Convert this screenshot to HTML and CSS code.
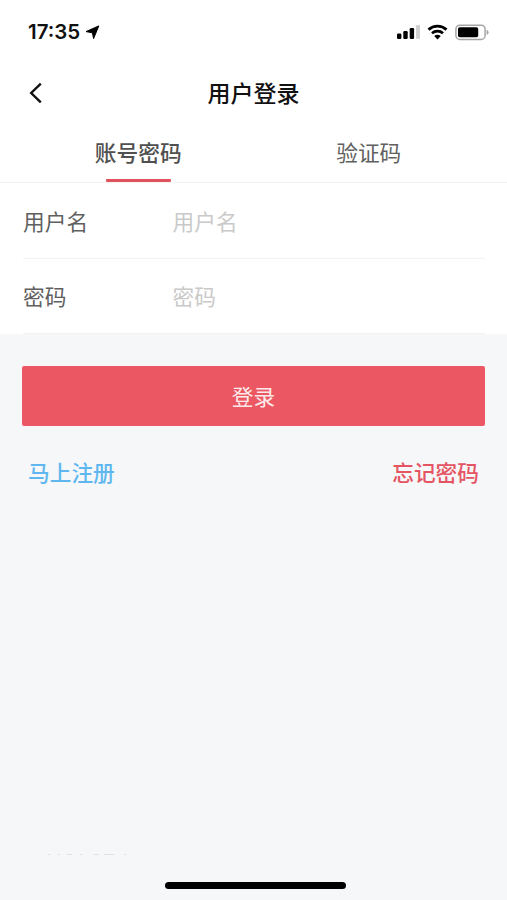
FILE: index.html
```html
<!DOCTYPE html>
<html lang="zh-CN">
<head>
<meta charset="utf-8">
<title>用户登录</title>
<link rel="stylesheet" href="styles.css">
</head>
<body>
<div class="screen">
  <header class="status">
    <span class="time">17:35</span>
    <svg class="locate" width="15" height="15" viewBox="0 0 15 15"><path d="M13.8.9 8.6 13.6 7.4 7.8 1 6.6Z"/></svg>
    <div class="indicators">
      <svg width="24" height="16" viewBox="0 0 24 16"><rect x="0" y="9.5" width="4.4" height="5.5" rx="1.2"/><rect x="6.3" y="7" width="4.4" height="8" rx="1.2"/><rect x="12.7" y="4" width="4.4" height="11" rx="1.2"/><rect class="off" x="19" y="1" width="4" height="14" rx="1.2"/></svg>
      <svg class="wifi" width="22" height="16" viewBox="0 0 22 16"><path d="M1.5 5.6a13.5 13.5 0 0 1 18 0M5 9.3a8.3 8.3 0 0 1 11 0"/><path class="dot" d="M7.2 12.1a5.2 5.2 0 0 1 6.6 0L10.5 15.4Z"/></svg>
      <svg class="battery" width="34" height="17" viewBox="0 0 34 17"><rect class="shell" x=".9" y="1.2" width="29.2" height="14.2" rx="4"/><rect x="3" y="3.3" width="20.2" height="10" rx="1.8"/><path class="cap" d="M31.6 5.8q2 .8 2 2.6t-2 2.6Z"/></svg>
    </div>
  </header>
  <nav class="bar">
    <svg class="back" width="14" height="22" viewBox="0 0 14 22"><path d="M11.8 1.7 2.2 11l9.6 9.3"/></svg>
    <h1 class="title">用户登录</h1>
  </nav>
  <div class="tabs">
    <div class="tab active">账号密码</div>
    <div class="tab">验证码</div>
  </div>
  <form class="fields">
    <label class="field"><span class="label">用户名</span><input class="input" type="text" placeholder="用户名"></label>
    <label class="field"><span class="label">密码</span><input class="input" type="password" placeholder="密码"></label>
  </form>
  <main class="actions">
    <button class="login" type="button">登录</button>
    <div class="links"><a class="register">马上注册</a><a class="forgot">忘记密码</a></div>
  </main>
  <footer class="foot">
    <svg class="traces" width="82" height="3" viewBox="0 0 82 3"><path d="M0 1.5h2M10 1.5h2M19 1.5h5M32 1.5h2M46 1.5h5M56 1.5h10M76 1.5h2"/></svg>
    <div class="home"></div>
  </footer>
</div>
</body>
</html>
```
FILE: styles.css
```css
* { box-sizing: border-box; }
body {
  margin: 0;
  font-family: "Noto Sans CJK SC", sans-serif;
  font-size: 21.7px;
  color: #606060;
}
.screen {
  height: 900px;
  display: flex;
  flex-direction: column;
  background: #f5f7f9;
  overflow: hidden;
}
.status {
  height: 64px;
  display: flex;
  align-items: center;
  padding: 0 18px 0 28px;
  background: #fff;
  flex: none;
}
.time {
  font: 600 20.5px/24px Inter, sans-serif;
  color: #111;
  width: 54px;
  white-space: nowrap;
}
.locate { margin-left: 3px; }
.locate path { stroke: #000; stroke-width: 1; stroke-linejoin: round; }
.indicators { margin-left: auto; display: flex; align-items: center; }
.off { fill: #d0d0d0; }
.wifi { margin: 0 6px 0 6px; }
.wifi path { fill: none; stroke: #000; stroke-width: 2.8; }
.wifi .dot { fill: #000; stroke: none; }
.shell { fill: none; stroke: #a5a5a5; stroke-width: 1.5; }
.cap { fill: #a5a5a5; }
.bar {
  height: 58px;
  display: grid;
  grid-template-columns: 60px 1fr 60px;
  align-items: center;
  background: #fff;
  flex: none;
}
.back { margin-left: 29px; }
.back path { fill: none; stroke: #111; stroke-width: 2.4; }
.title {
  margin: 0;
  padding-bottom: 2px;
  text-align: center;
  font-size: 23px;
  line-height: 34px;
  font-weight: 500;
  color: #111;
}
.tabs {
  height: 61px;
  display: flex;
  background: #fff;
  border-bottom: 1px solid #f3f3f3;
  padding: 0 23px;
  flex: none;
}
.tab { flex: 1; text-align: center; line-height: 59px; position: relative; }
.active { font-weight: 500; color: #505050; }
.active::after {
  content: "";
  position: absolute;
  left: 50%;
  bottom: 0;
  width: 65px;
  height: 3px;
  margin-left: -32.5px;
  border-radius: 1px;
  background: #e2525e;
}
.fields { background: #fff; padding: 0 22px 0 23px; flex: none; }
.field {
  display: flex;
  align-items: center;
  height: 75.5px;
  border-bottom: 1px solid #f3f3f3;
}
.label { width: 149.5px; }
.input {
  flex: 1;
  min-width: 0;
  border: 0;
  padding: 0;
  outline: 0;
  background: none;
  font: inherit;
}
.input::placeholder { color: #c9c9c9; opacity: 1; }
.actions { padding: 32px 22px 0; flex: 1; }
.login {
  display: block;
  width: 100%;
  height: 60px;
  border: 0;
  border-radius: 2px;
  padding: 0 0 2px;
  background: #eb5863;
  color: #fde9ea;
  font: inherit;
}
.links {
  display: flex;
  justify-content: space-between;
  padding: 0 6px;
  margin-top: 30px;
  line-height: 32px;
  font-weight: 500;
}
.register { color: #60b7ef; }
.forgot { color: #e55462; }
.foot { height: 48px; flex: none; }
.traces { display: block; margin: 1px 0 0 48px; }
.traces path { stroke: #dfe1e3; stroke-width: 1; }
.home {
  width: 181px;
  height: 7px;
  margin: 26px 0 0 165px;
  border-radius: 4px;
  background: #000;
}
```
